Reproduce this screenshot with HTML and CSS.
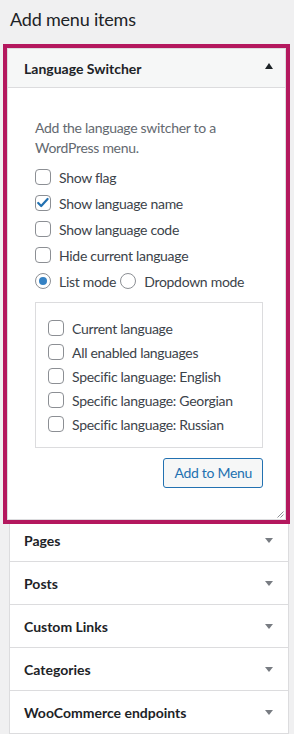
FILE: index.html
```html
<!DOCTYPE html>
<html lang="en">
<head>
<meta charset="utf-8">
<title>Add menu items</title>
<link rel="stylesheet" href="styles.css">
</head>
<body>
<h2 class="title">Add menu items</h2>
<div class="sections">
  <div class="panel">
    <h3 class="sec-head">Language Switcher
      <svg class="arrow" width="8" height="6" viewBox="0 0 8 6"><polygon points="0,6 8,6 4,0" fill="#1d2327"/></svg>
    </h3>
    <div class="sec-body">
      <p class="desc">Add the language switcher to a WordPress menu.</p>
      <div class="opts">
        <label class="opt"><span class="box"></span>Show flag</label>
        <label class="opt"><span class="box"><svg width="14" height="14" viewBox="0 0 14 14"><polyline points="2.2,7 5.2,10 11.6,3" fill="none" stroke="#2271b1" stroke-width="2.2" stroke-linecap="round" stroke-linejoin="round"/></svg></span>Show language name</label>
        <label class="opt"><span class="box"></span>Show language code</label>
        <label class="opt"><span class="box"></span>Hide current language</label>
        <div class="opt">
          <label class="radio-opt"><span class="radio on"></span>List mode</label>
          <label class="radio-opt"><span class="radio"></span>Dropdown mode</label>
        </div>
      </div>
      <div class="list">
        <label class="item"><span class="box"></span>Current language</label>
        <label class="item"><span class="box"></span>All enabled languages</label>
        <label class="item"><span class="box"></span>Specific language: English</label>
        <label class="item"><span class="box"></span>Specific language: Georgian</label>
        <label class="item"><span class="box"></span>Specific language: Russian</label>
      </div>
      <div class="actions"><button class="btn" type="button">Add to Menu</button></div>
      <svg class="grip" width="7" height="7" viewBox="0 0 7 7"><line x1="0.5" y1="6.5" x2="6.5" y2="0.5" stroke="#8c8f94" stroke-width="1"/><line x1="3.5" y1="6.5" x2="6.5" y2="3.5" stroke="#8c8f94" stroke-width="1"/></svg>
    </div>
  </div>
  <div class="sec first"><h3 class="sec-head">Pages<svg class="arrow" width="8" height="5" viewBox="0 0 8 5"><polygon points="0,0 8,0 4,5" fill="#787c82"/></svg></h3></div>
  <div class="sec"><h3 class="sec-head">Posts<svg class="arrow" width="8" height="5" viewBox="0 0 8 5"><polygon points="0,0 8,0 4,5" fill="#787c82"/></svg></h3></div>
  <div class="sec"><h3 class="sec-head">Custom Links<svg class="arrow" width="8" height="5" viewBox="0 0 8 5"><polygon points="0,0 8,0 4,5" fill="#787c82"/></svg></h3></div>
  <div class="sec"><h3 class="sec-head">Categories<svg class="arrow" width="8" height="5" viewBox="0 0 8 5"><polygon points="0,0 8,0 4,5" fill="#787c82"/></svg></h3></div>
  <div class="sec"><h3 class="sec-head">WooCommerce endpoints<svg class="arrow" width="8" height="5" viewBox="0 0 8 5"><polygon points="0,0 8,0 4,5" fill="#787c82"/></svg></h3></div>
</div>
</body>
</html>
```

FILE: styles.css
```css
* { box-sizing: border-box; }
html, body { margin: 0; padding: 0; }
body {
  background: #f0f0f1;
  font-family: "Segoe UI", Lato, "Noto Sans", sans-serif;
  font-size: 14px;
  color: #3c434a;
  width: 294px;
  height: 734px;
  overflow: hidden;
}
.title {
  margin: 0;
  padding: 7px 0 0 10px;
  height: 48px;
  font-size: 18px;
  line-height: 24px;
  font-weight: 400;
  letter-spacing: -0.2px;
  color: #1d2327;
}
.sections { display: flex; flex-direction: column; }
.panel {
  margin-left: 7px;
  width: 279px;
  border: 1px solid #dcdcde;
  background: #fff;
  outline: 4px solid #b4185e;
  position: relative;
  z-index: 1;
}
.sec-head {
  margin: 0;
  display: flex;
  align-items: center;
  justify-content: space-between;
  font-size: 14px;
  font-weight: 700;
  color: #1d2327;
}
.panel .sec-head {
  height: 39px;
  padding: 0 12px 0 16px;
  background: #f6f7f7;
  border-bottom: 1px solid #dcdcde;
}
.panel .sec-head .arrow { margin-top: -4px; }
.sec-body {
  position: relative;
  padding: 30px 22px 31px 27px;
  letter-spacing: -0.3px;
}
.desc {
  margin: 0 0 6px;
  line-height: 20px;
  color: #646970;
}
.opts { display: flex; flex-direction: column; }
.opt, .radio-opt, .item {
  display: flex;
  align-items: center;
  color: #3c434a;
}
.opt { height: 26px; }
.radio-opt { margin-right: 4px; }
.item { height: 24px; }
.box, .radio {
  width: 16px;
  height: 16px;
  flex: none;
  border: 1px solid #8c8f94;
  background: #fff;
  margin-right: 8px;
  display: flex;
  align-items: center;
  justify-content: center;
}
.box { border-radius: 4px; }
.radio { border-radius: 50%; }
.radio.on::before {
  content: "";
  width: 8px;
  height: 8px;
  border-radius: 50%;
  background: #3582c4;
}
.list {
  margin-top: 8px;
  border: 1px solid #dcdcde;
  padding: 13px 12px 11px 12px;
  display: flex;
  flex-direction: column;
}
.actions {
  margin-top: 10px;
  display: flex;
  justify-content: flex-end;
}
.btn {
  height: 30px;
  padding: 0 10px;
  border: 1px solid #2271b1;
  border-radius: 3px;
  background: #f6f7f7;
  color: #2271b1;
  font-family: inherit;
  font-size: 14px;
  letter-spacing: -0.3px;
  line-height: 28px;
}
.grip {
  position: absolute;
  right: 1px;
  bottom: 1px;
}
.sec {
  margin-left: 9px;
  width: 280px;
  background: #fff;
  border: 1px solid #dcdcde;
  border-top: none;
}
.sec .sec-head {
  height: 42px;
  padding: 0 15px 0 14px;
}
.sec.first .sec-head { height: 41px; }
```
